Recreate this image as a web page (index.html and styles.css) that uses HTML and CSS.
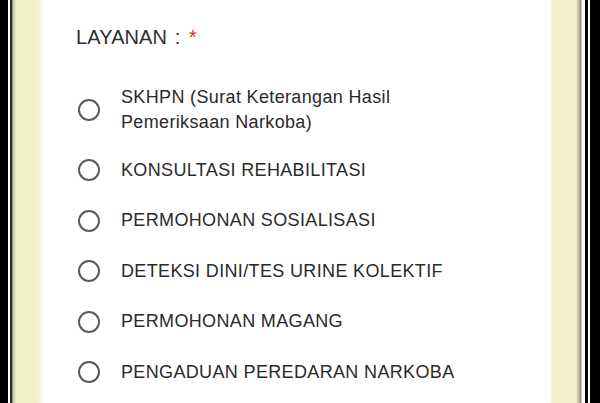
FILE: index.html
```html
<!DOCTYPE html>
<html>
<head>
<meta charset="utf-8">
<link rel="stylesheet" href="styles.css">
</head>
<body>
<div class="frame">
  <div class="bezel-left"></div>
  <div class="card">
    <div class="title">LAYANAN : <span class="req">*</span></div>
    <div class="options">
      <div class="opt"><span class="radio"></span><span class="label">SKHPN (Surat Keterangan Hasil<br>Pemeriksaan Narkoba)</span></div>
      <div class="opt"><span class="radio"></span><span class="label">KONSULTASI REHABILITASI</span></div>
      <div class="opt"><span class="radio"></span><span class="label">PERMOHONAN SOSIALISASI</span></div>
      <div class="opt"><span class="radio"></span><span class="label">DETEKSI DINI/TES URINE KOLEKTIF</span></div>
      <div class="opt"><span class="radio"></span><span class="label">PERMOHONAN MAGANG</span></div>
      <div class="opt"><span class="radio"></span><span class="label">PENGADUAN PEREDARAN NARKOBA</span></div>
    </div>
  </div>
  <div class="bezel-right"></div>
</div>
</body>
</html>
```
FILE: styles.css
```css
html, body { margin: 0; padding: 0; }
body { width: 600px; height: 403px; overflow: hidden; font-family: "Liberation Sans", Arial, sans-serif; }
.frame { display: flex; width: 600px; height: 403px; }
.bezel-left {
  width: 43px; flex: none;
  background: linear-gradient(to right, #000 0, #000 8px, #fff 8px, #fff 10px, #2a2a2a 10px, #2a2a2a 12px, #8a8a78 12px, #d8d6b4 14px, #f1efc6 16px, #f4f2cb 38px, #f8f7e4 41px, #fdfdf8 43px);
}
.bezel-right {
  width: 50px; flex: none;
  background: linear-gradient(to right, #fbfaf0 0, #f3f1c8 3px, #f4f2cb 26px, #c9c6a8 28px, #8f8d78 31px, #fff 32px, #fff 35px, #000 35px, #000 38px, #fff 38px, #fff 40px, #000 40px, #000 50px);
}
.card { flex: 1; background: #fff; padding: 24px 0 0 33px; color: #2b2b2b; }
.title { font-size: 20px; line-height: 26px; color: #2e2e2e; word-spacing: 2px; letter-spacing: 0.1px; }
.req { color: #d93025; margin-left: 1px; }
.options { margin-top: 29px; display: flex; flex-direction: column; }
.opt { display: flex; align-items: center; min-height: 50.5px; }
.opt:first-child { min-height: 62px; margin-bottom: 4px; }
.radio {
  width: 18px; height: 18px; border: 2.5px solid #5a5a5a; border-radius: 50%;
  flex: none; margin-left: 2px; margin-right: 21px;
}
.label { font-size: 18px; line-height: 25px; color: #2a2a2a; letter-spacing: 0.35px; }
```
